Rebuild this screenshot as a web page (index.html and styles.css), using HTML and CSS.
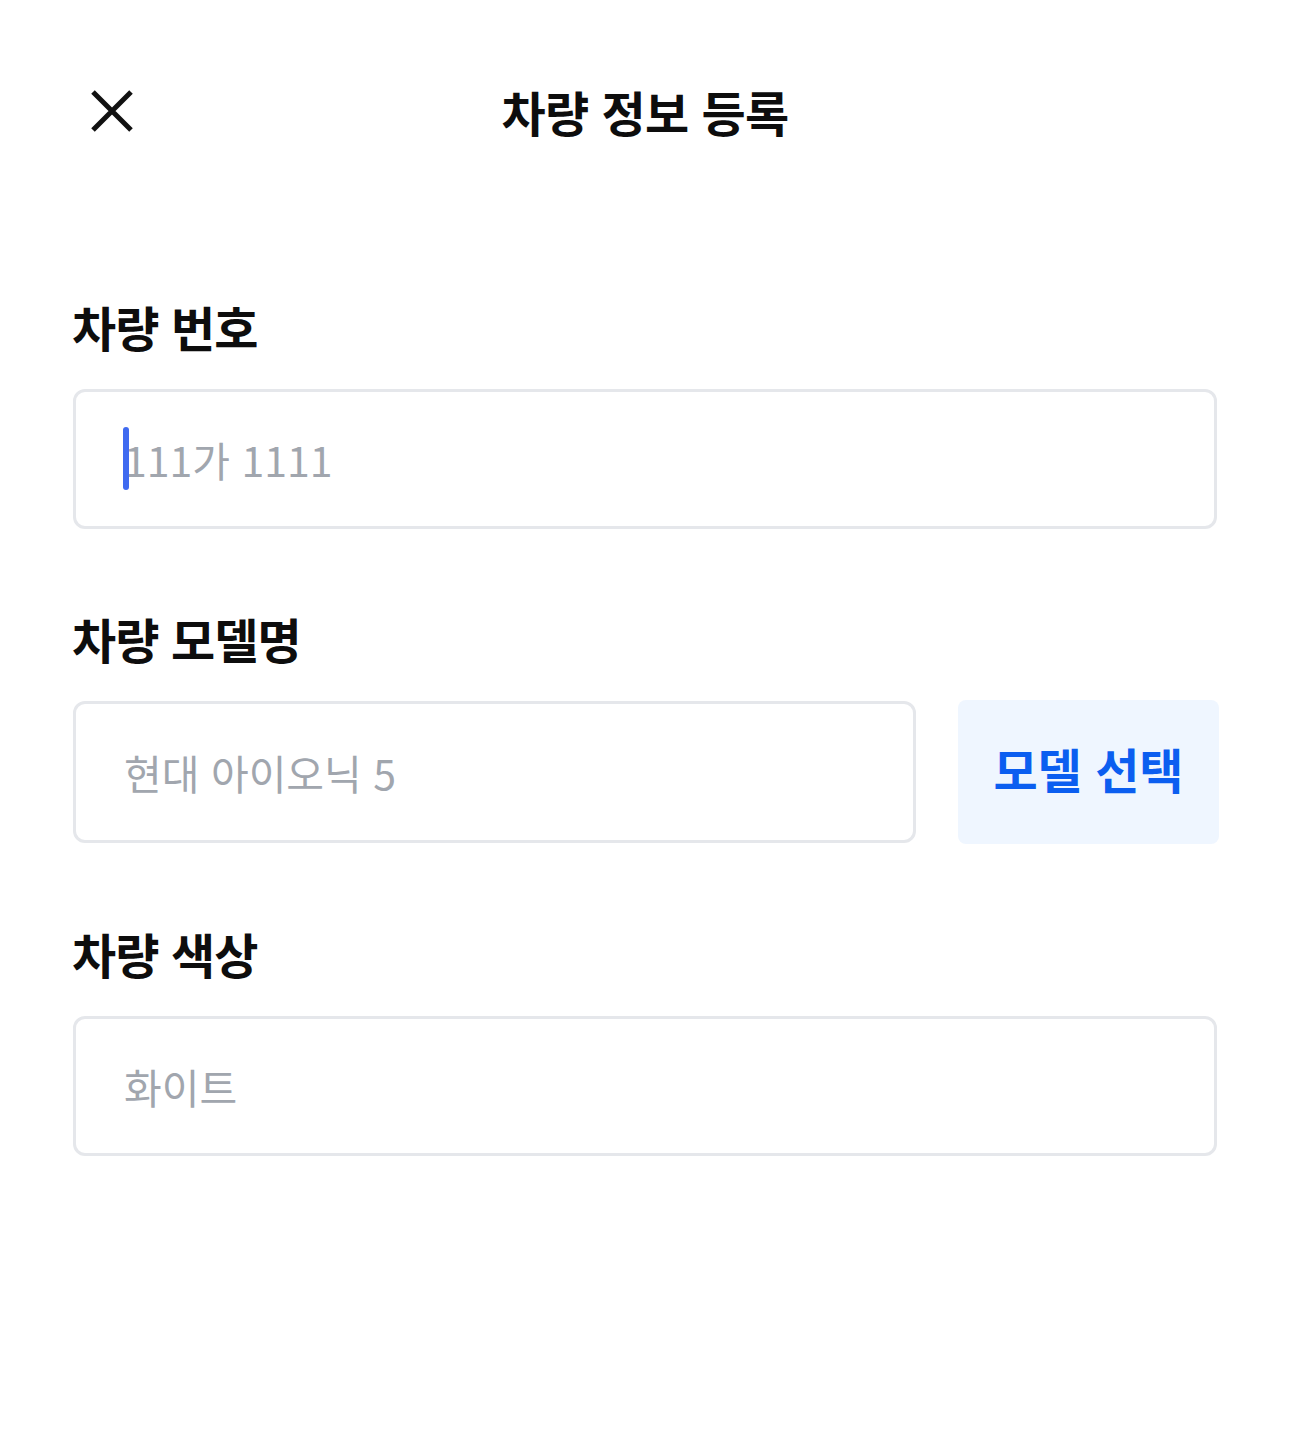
FILE: index.html
```html
<!DOCTYPE html>
<html lang="ko">
<head>
    <meta charset="UTF-8">
    <meta name="viewport" content="width=device-width, initial-scale=1.0">
    <title>차량 정보 등록</title>
    <link rel="stylesheet" href="styles.css">
</head>
<body>

    <!-- 상단 헤더 -->
    <div class="header">
        <button class="btn-cerrar" aria-label="닫기">
            <svg width="44" height="44" viewBox="0 0 44 44">
                <path d="M3 3 L41 41 M41 3 L3 41" stroke="#111" stroke-width="5" stroke-linecap="butt"/>
            </svg>
        </button>
        <h1 class="titulo">차량 정보 등록</h1>
        <div></div>
    </div>

    <!-- 입력 폼 -->
    <form class="formulario">
        <div class="campo">
            <label for="numero">차량 번호</label>
            <div class="entrada">
                <span class="cursor"></span>
                <input type="text" id="numero" placeholder="111가 1111">
            </div>
        </div>

        <div class="campo">
            <label for="modelo">차량 모델명</label>
            <div class="fila">
                <div class="entrada">
                    <input type="text" id="modelo" placeholder="현대 아이오닉 5">
                </div>
                <button type="button" class="btn-modelo">모델 선택</button>
            </div>
        </div>

        <div class="campo">
            <label for="color">차량 색상</label>
            <div class="entrada">
                <input type="text" id="color" placeholder="화이트">
            </div>
        </div>
    </form>

</body>
</html>
```

FILE: styles.css
```css
body {
    font-family: "Noto Sans CJK KR", "Noto Sans", sans-serif;
    background-color: #fff;
    color: #0d0d0d;
    margin: 0;
}
.header {
    display: grid;
    grid-template-columns: 1fr auto 1fr;
    align-items: center;
    height: 222px;
    padding: 0 73px;
}
.btn-cerrar {
    background: none;
    border: none;
    padding: 0 0 0 17px;
    width: 80px;
    display: flex;
    align-items: center;
    cursor: pointer;
}
.titulo {
    margin: 0;
    font-size: 48px;
    font-weight: 700;
    letter-spacing: -0.6px;
}
.formulario {
    padding: 72px 73px 0;
}
.campo {
    margin-bottom: 77px;
}
.campo label {
    display: block;
    margin-left: -1px;
    font-size: 48px;
    font-weight: 700;
    line-height: 64px;
    letter-spacing: -0.9px;
    margin-bottom: 31px;
}
.fila {
    display: flex;
    gap: 42px;
    margin-right: -2px;
}
.fila .entrada {
    flex: 1;
}
.entrada {
    position: relative;
}
.entrada input {
    box-sizing: border-box;
    width: 100%;
    height: 140px;
    border: 3px solid #e5e7eb;
    border-radius: 12px;
    padding: 0 48px;
    font-family: inherit;
    font-size: 41px;
    color: #111;
    outline: none;
}
.fila .entrada input {
    height: 142px;
}
.entrada input::placeholder {
    color: #a1a6ae;
}
.cursor {
    position: absolute;
    left: 50px;
    top: 38px;
    width: 6px;
    height: 63px;
    border-radius: 3px;
    background-color: #3f6af0;
}
.btn-modelo {
    width: 261px;
    height: 144px;
    margin-top: -1px;
    padding: 0 0 8px;
    background-color: #eff6ff;
    color: #0b5ef0;
    border: none;
    border-radius: 8px;
    font-family: inherit;
    font-size: 48px;
    font-weight: 700;
    cursor: pointer;
}
```
